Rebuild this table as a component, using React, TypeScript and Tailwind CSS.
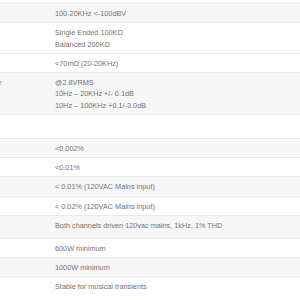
const rows: { label: string; value: string[]; tall?: boolean; empty?: boolean }[] = [
  { label: "S/N", value: ["100-20KHz <-100dBV"] },
  { label: "Input Z", value: ["Single Ended 100KΩ", "Balanced 200KΩ"] },
  { label: "Output Z", value: ["<70mΩ (20-20KHz)"] },
  { label: "Frequency Response", value: ["@2.8VRMS", "10Hz – 20KHz +/- 0.1dB", "10Hz – 100KHz +0.1/-3.0dB"] },
  { label: "", value: [], empty: true },
  { label: "THD", value: ["<0.002%"] },
  { label: "IMD", value: ["<0.01%"] },
  { label: "THD+N", value: ["< 0.01% (120VAC Mains input)"] },
  { label: "Noise", value: ["< 0.02% (120VAC Mains input)"] },
  { label: "Power", value: ["Both channels driven 120vac mains, 1kHz, 1% THD"], tall: true },
  { label: "8Ω", value: ["600W minimum"] },
  { label: "4Ω", value: ["1000W minimum"] },
  { label: "2Ω", value: ["Stable for musical transients"] },
]

export default function App() {
  return (
    <div className="w-[300px] h-[300px] overflow-hidden bg-white pt-[3px]">
      <div className="ml-[-120px] w-[420px] text-[7.3px] leading-[11.25px] text-[#737373] font-['Liberation_Sans',Arial,sans-serif]">
        {rows.map((r, i) => (
          <div
            key={i}
            className={`grid grid-cols-[175px_1fr] border-t border-[#e9e9e9] ${
              [0, 3, 5, 7, 9, 11].includes(i) ? "bg-[#f7f7f7]" : "bg-white"
            }`}
          >
            <div className="pl-[52px] pt-[4px] pb-[3px] whitespace-nowrap">{r.label}</div>
            <div
              className={`pt-[4px] ${r.empty ? "h-[23px]" : r.tall ? "pb-[6.75px]" : "pb-[3px]"}`}
            >
              {r.value.map((v, j) => (
                <div key={j} className="whitespace-nowrap">
                  {v}
                </div>
              ))}
            </div>
          </div>
        ))}
      </div>
    </div>
  )
}
